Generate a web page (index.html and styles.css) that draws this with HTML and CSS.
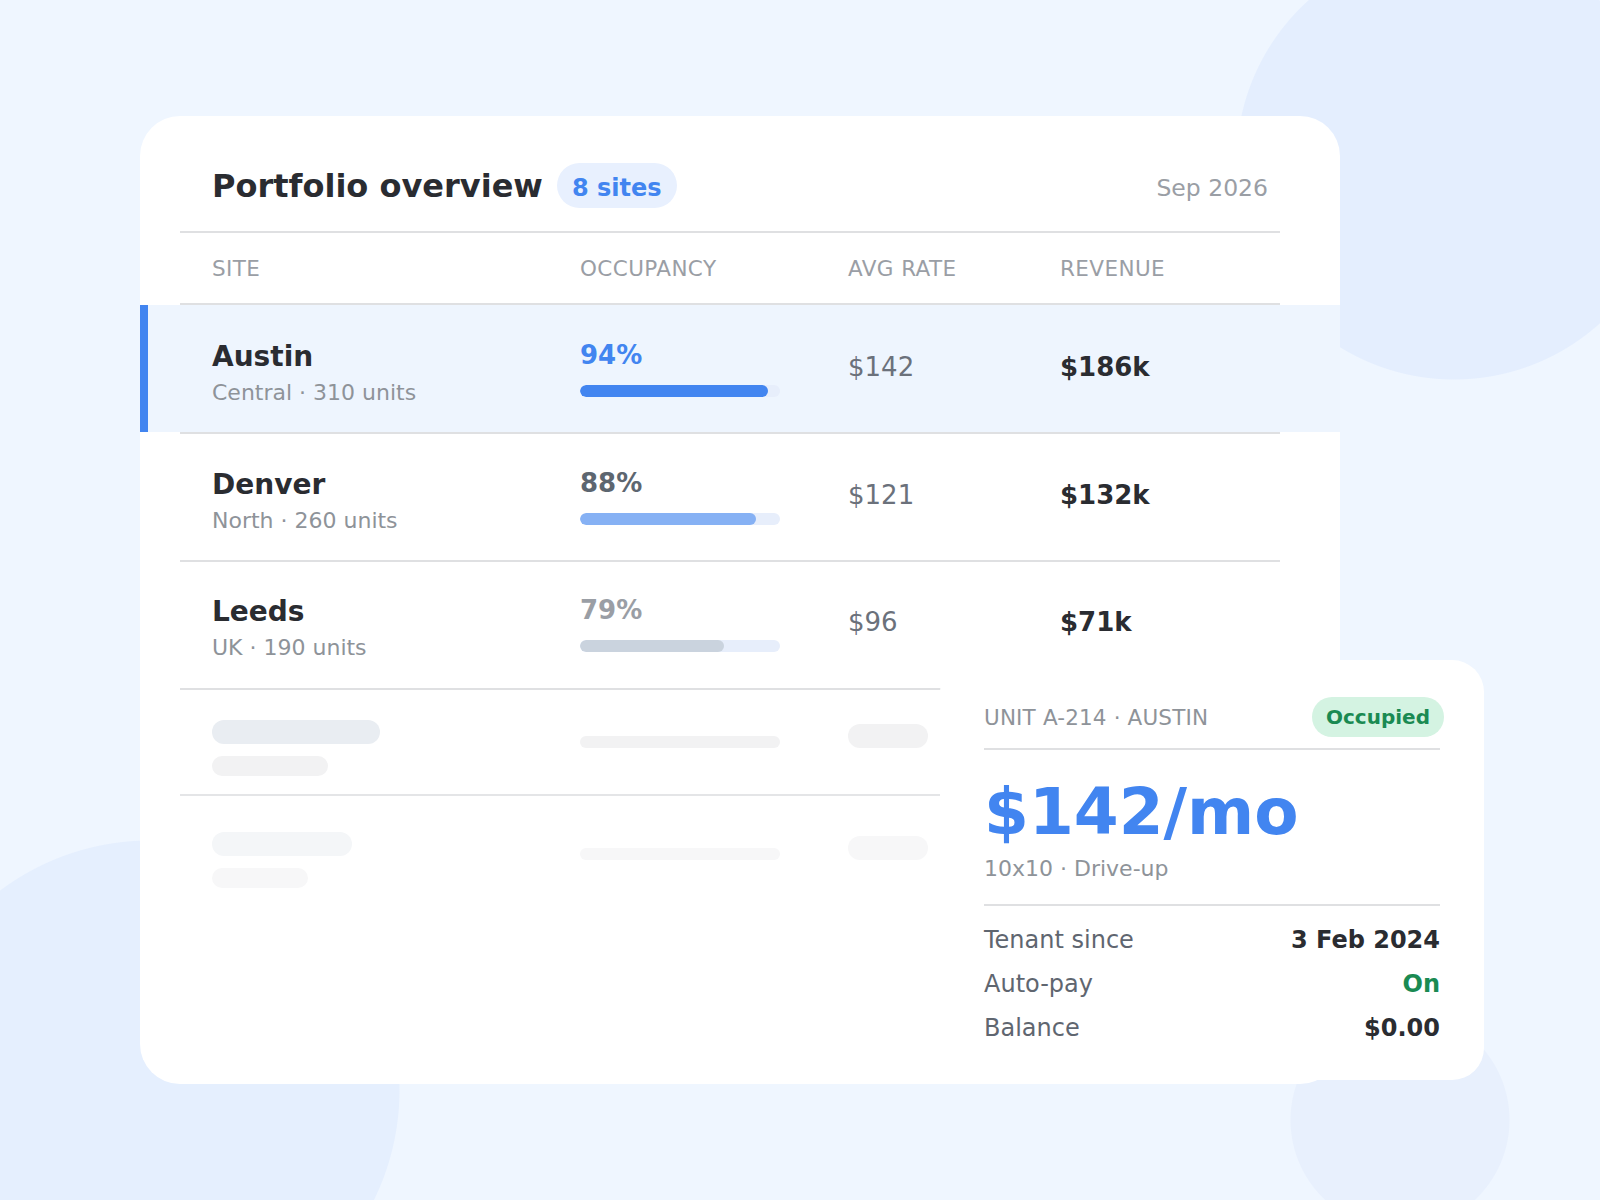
FILE: index.html
```html
<!DOCTYPE html>
<html lang="en">
<head>
<meta charset="utf-8">
<title>Portfolio overview</title>
<link rel="stylesheet" href="styles.css">
</head>
<body>
<div class="stage">
  <div class="card">
    <div class="card-head">
      <h1 class="title">Portfolio overview</h1>
      <span class="badge">8 sites</span>
      <span class="date">Sep 2026</span>
    </div>
    <div class="thead">
      <span>Site</span><span>Occupancy</span><span>Avg rate</span><span>Revenue</span>
    </div>

    <div class="row active">
      <div class="cells">
        <div class="c-site"><div class="name">Austin</div><div class="sub">Central · 310 units</div></div>
        <div class="c-occ"><div class="pct pct-hi">94%</div><div class="bar"><div class="fill fill-hi" style="width:94%"></div></div></div>
        <div class="c-num rate">$142</div>
        <div class="c-num rev">$186k</div>
      </div>
    </div>

    <div class="row row-mid">
      <div class="cells">
        <div class="c-site"><div class="name">Denver</div><div class="sub">North · 260 units</div></div>
        <div class="c-occ"><div class="pct pct-mid">88%</div><div class="bar"><div class="fill fill-mid" style="width:88%"></div></div></div>
        <div class="c-num rate">$121</div>
        <div class="c-num rev">$132k</div>
      </div>
    </div>

    <div class="row row-last">
      <div class="cells">
        <div class="c-site"><div class="name">Leeds</div><div class="sub">UK · 190 units</div></div>
        <div class="c-occ"><div class="pct pct-lo">79%</div><div class="bar"><div class="fill fill-lo" style="width:72%"></div></div></div>
        <div class="c-num rate">$96</div>
        <div class="c-num rev">$71k</div>
      </div>
    </div>

    <div class="skel skel-1">
      <div class="sk-site"><div class="sk sk-a"></div><div class="sk sk-b"></div></div>
      <div class="sk-occ"><div class="sk sk-c"></div></div>
      <div class="sk-num"><div class="sk sk-d"></div></div>
    </div>
    <div class="skel skel-2">
      <div class="sk-site"><div class="sk sk-a"></div><div class="sk sk-b"></div></div>
      <div class="sk-occ"><div class="sk sk-c"></div></div>
      <div class="sk-num"><div class="sk sk-d"></div></div>
    </div>
  </div>

  <div class="unit-card">
    <div class="unit-head">
      <span class="unit-label">Unit A-214 · Austin</span>
      <span class="status">Occupied</span>
    </div>
    <div class="unit-main">
      <div class="price">$142/mo</div>
      <div class="unit-sub">10x10 · Drive-up</div>
    </div>
    <div class="details">
      <div class="drow"><span class="dl">Tenant since</span><span class="dv">3 Feb 2024</span></div>
      <div class="drow"><span class="dl">Auto-pay</span><span class="dv dv-on">On</span></div>
      <div class="drow"><span class="dl">Balance</span><span class="dv">$0.00</span></div>
    </div>
  </div>
</div>
</body>
</html>
```

FILE: styles.css
```css
html, body {
  margin: 0;
  padding: 0;
}

body {
  font-family: "DejaVu Sans", "Noto Sans", sans-serif;
  color: #2a2c31;
}

.stage {
  position: relative;
  width: 1600px;
  height: 1200px;
  box-sizing: border-box;
  padding: 116px 0 0 140px;
  overflow: hidden;
  background-color: #eff6ff;
  background-image:
    radial-gradient(circle 218px at 1454px 162px, #e4eefe 217px, rgba(228, 238, 254, 0) 218px),
    radial-gradient(circle 250px at 150px 1090px, #e5effe 249px, rgba(229, 239, 254, 0) 250px),
    radial-gradient(circle 110px at 1400px 1120px, #e8f0fd 109px, rgba(232, 240, 253, 0) 110px);
}

/* main card */
.card {
  width: 1200px;
  height: 968px;
  background: #ffffff;
  border-radius: 40px;
  overflow: hidden;
}

.card-head {
  margin: 0 60px 0 40px;
  padding: 47px 12px 23px 32px;
  border-bottom: 2px solid #dfe0e2;
  display: flex;
  align-items: center;
  height: 45px;
}

.title {
  margin: 0;
  font-size: 32px;
  font-weight: 700;
  color: #2a2c31;
}

.badge {
  margin-left: 14px;
  height: 45px;
  box-sizing: border-box;
  line-height: 45px;
  padding: 3px 15px 0;
  border-radius: 23px;
  background: #e8f0fe;
  color: #4285f0;
  font-size: 24px;
  font-weight: 700;
}

.date {
  margin-left: auto;
  font-size: 23.5px;
  color: #9a9ea5;
  padding-top: 4px;
}

.thead {
  margin: 0 60px 0 40px;
  padding-left: 32px;
  height: 70px;
  border-bottom: 2px solid #dfe0e2;
  display: grid;
  grid-template-columns: 368px 268px 212px 1fr;
  align-items: center;
  font-size: 21.5px;
  letter-spacing: 0.4px;
  color: #9a9ea5;
  text-transform: uppercase;
}

/* rows */
.row::after {
  content: "";
  display: block;
  height: 2px;
  margin: 0 60px 0 40px;
  background: #dfe0e2;
}

.cells {
  height: 127px;
  box-sizing: border-box;
  padding-left: 72px;
  padding-right: 60px;
  display: grid;
  grid-template-columns: 368px 268px 212px 1fr;
  align-items: start;
}

.row.active .cells {
  background: linear-gradient(to right, #4285f0 0, #4285f0 8px, #eef5fe 8px);
}

.c-site {
  padding-top: 35px;
}

.c-occ {
  padding-top: 34px;
}

.c-num {
  padding-top: 46px;
  font-size: 26px;
  line-height: 32px;
}

.row-mid .cells {
  height: 126px;
}

.row-mid .c-site { padding-top: 34px; }
.row-mid .c-occ { padding-top: 33px; }
.row-mid .c-num { padding-top: 45px; }

.row-last .cells {
  height: 126px;
}

.row-last .c-site { padding-top: 33px; }
.row-last .c-occ { padding-top: 32px; }
.row-last .c-num { padding-top: 44px; }

.name {
  font-size: 28px;
  font-weight: 700;
  line-height: 34px;
  color: #2a2c31;
}

.sub {
  margin-top: 4px;
  font-size: 22px;
  line-height: 30px;
  color: #8e9399;
}

.pct {
  font-size: 26px;
  font-weight: 700;
  line-height: 32px;
}

.pct-hi { color: #4285f0; }
.pct-mid { color: #5d6670; }
.pct-lo { color: #9a9ea5; }

.bar {
  margin-top: 14px;
  width: 200px;
  height: 12px;
  border-radius: 6px;
  background: #e7eefb;
  overflow: hidden;
}

.fill {
  height: 100%;
  border-radius: 6px;
}

.fill-hi { background: #4285f0; }
.fill-mid { background: #86b1f4; }
.fill-lo { background: #cad3de; }

.rate {
  color: #6b717b;
}

.rev {
  font-weight: 700;
  color: #2a2c31;
}

/* skeleton */
.skel {
  margin-left: 40px;
  width: 760px;
  box-sizing: border-box;
  padding-left: 32px;
  display: grid;
  grid-template-columns: 368px 268px 1fr;
  align-items: start;
}

.skel-1 {
  height: 106px;
  padding-top: 30px;
  border-bottom: 2px solid #e4e5e7;
}

.skel-2 {
  padding-top: 36px;
}

.sk {
  border-radius: 12px;
}

.sk-a {
  width: 168px;
  height: 24px;
}

.sk-b {
  margin-top: 12px;
  width: 116px;
  height: 20px;
}

.sk-occ {
  padding-top: 16px;
}

.sk-c {
  width: 200px;
  height: 12px;
}

.sk-num {
  padding-top: 4px;
}

.sk-d {
  width: 80px;
  height: 24px;
}

.skel-1 .sk-a { background: #e9edf2; }
.skel-1 .sk-b,
.skel-1 .sk-c,
.skel-1 .sk-d { background: #f2f2f3; }

.skel-2 .sk-a { width: 140px; background: #f4f6f8; }
.skel-2 .sk-b { width: 96px; background: #f7f7f8; }
.skel-2 .sk-c,
.skel-2 .sk-d { background: #f7f7f8; }

/* unit overlay card */
.unit-card {
  position: absolute;
  left: 940px;
  top: 660px;
  width: 544px;
  height: 420px;
  box-sizing: border-box;
  padding: 37px 44px 0 44px;
  background: #ffffff;
  border-radius: 32px;
}

.unit-head {
  display: flex;
  align-items: center;
  justify-content: space-between;
  height: 40px;
  padding-bottom: 11px;
  border-bottom: 2px solid #dfe0e2;
}

.unit-label {
  font-size: 21.5px;
  letter-spacing: 0.15px;
  color: #8e9399;
  text-transform: uppercase;
}

.status {
  height: 40px;
  line-height: 40px;
  padding: 0 14px;
  margin-right: -4px;
  border-radius: 20px;
  background: #d4f3e2;
  color: #1a8a52;
  font-size: 20px;
  font-weight: 700;
}

.unit-main {
  padding-top: 30px;
  padding-bottom: 21px;
  border-bottom: 2px solid #dfe0e2;
}

.price {
  font-size: 64.5px;
  line-height: 64px;
  font-weight: 700;
  color: #4285f0;
}

.unit-sub {
  margin-top: 11px;
  font-size: 22px;
  line-height: 28px;
  color: #8e9399;
}

.details {
  padding-top: 12px;
}

.drow {
  display: flex;
  justify-content: space-between;
  height: 44px;
  line-height: 44px;
  font-size: 24px;
}

.dl {
  color: #5f6670;
}

.dv {
  font-weight: 700;
  color: #2a2c31;
}

.dv-on {
  color: #1a8a52;
}
```
